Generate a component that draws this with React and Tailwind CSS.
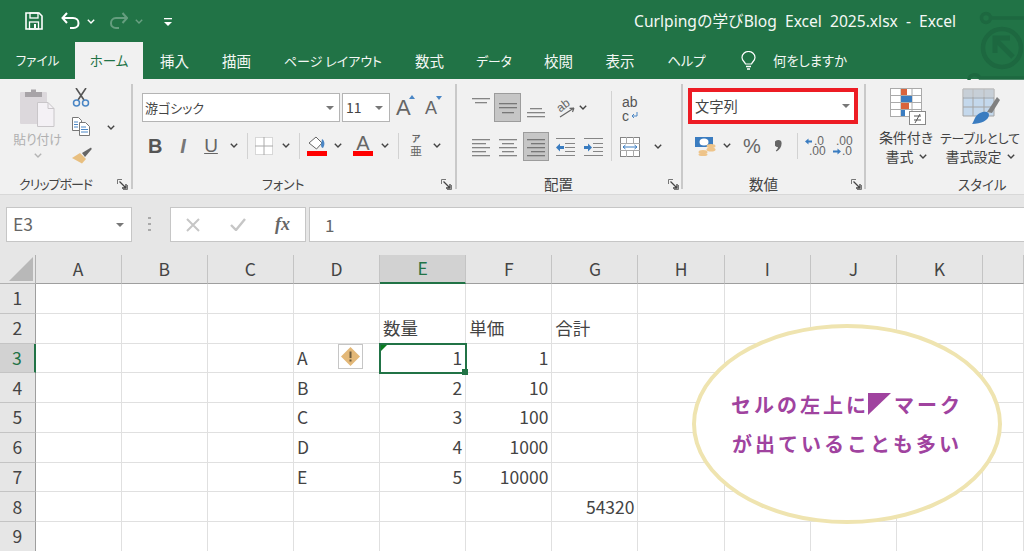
import React from 'react';

const JP = "font-['Noto_Sans_CJK_JP','Noto_Sans',sans-serif] [font-feature-settings:'palt']";

function Chev({ className = '', c = '#444' }) {
  return (
    <svg width="8" height="5" viewBox="0 0 8 5" className={`shrink-0 ${className}`}>
      <path d="M.8.8 4 4 7.2.8" fill="none" stroke={c} strokeWidth="1.4" />
    </svg>
  );
}
function Caret({ className = '' }) {
  return (
    <svg width="8" height="4" viewBox="0 0 8 4" className={`shrink-0 ${className}`}>
      <path d="M0 0h8L4 4z" fill="#777" />
    </svg>
  );
}
function Launcher({ className = '' }) {
  return (
    <svg width="11" height="11" viewBox="0 0 11 11" className={`shrink-0 ${className}`}>
      <path d="M.5 5V.5H5M10.5 6v4.5H6" fill="none" stroke="#777" />
      <path d="M2.5 2.5 9 9M9 5v4H5" fill="none" stroke="#444" strokeWidth="1.3" />
    </svg>
  );
}
function Sep({ className = '' }) {
  return <div className={`w-px h-[26px] bg-[#d2d2d2] shrink-0 ${className}`} />;
}
function Bars({ rows, w = 18, color = '#858585' }) {
  return (
    <svg width={w} height="29" viewBox={`0 0 ${w} 29`}>
      {rows.map((r, i) => (
        <rect key={i} x={r[1]} y={r[0]} width={r[2]} height="1.3" fill={color} />
      ))}
    </svg>
  );
}
function Cell({ active, className = '', children }) {
  return (
    <div className={`w-[27px] h-[29px] flex items-center justify-center shrink-0 ${active ? 'bg-[#c6c6c6] border border-[#9c9c9c]' : ''} ${className}`}>
      {children}
    </div>
  );
}

function Title() {
  return (
    <div className="h-[42px] flex items-center relative">
      <svg width="18" height="18" viewBox="0 0 18 18" className="ml-[25px]">
        <path d="M1 1h13l3 3v13H1z" fill="none" stroke="#fff" strokeWidth="1.6" />
        <rect x="5" y="1" width="8" height="5" fill="none" stroke="#fff" strokeWidth="1.3" />
        <rect x="4.500" y="10" width="9" height="7" fill="none" stroke="#fff" strokeWidth="1.3" />
        <rect x="9" y="12" width="2" height="4" fill="#fff" />
      </svg>
      <svg width="19" height="18" viewBox="0 0 19 18" className="ml-[18px]">
        <path d="M6 1 1.500 6 6 11" fill="none" stroke="#fff" strokeWidth="2" />
        <path d="M2 6h10c3.500 0 5.500 2.400 5.500 5.200 0 2.800-2 4.800-5 4.800H9" fill="none" stroke="#fff" strokeWidth="2" />
      </svg>
      <Chev c="#fff" className="ml-[7px]" />
      <svg width="18" height="18" viewBox="0 0 18 18" className="ml-[15px] opacity-30">
        <path d="M12.500 1 17 6l-4.500 5" fill="none" stroke="#fff" strokeWidth="2" />
        <path d="M16 6H6C2.800 6 1 8.400 1 11.200 1 14 3 16 6 16h3" fill="none" stroke="#fff" strokeWidth="2" />
      </svg>
      <Chev c="#ffffff55" className="ml-[7px]" />
      <svg width="10" height="10" viewBox="0 0 10 10" className="ml-[20px] mt-[1px]">
        <rect x="1" y="1" width="8" height="1.300" fill="#fff" />
        <path d="M1 5h8L5 9z" fill="#fff" />
      </svg>
      <div className={`flex-1 text-right pr-[68px] pt-[2px] text-[15.600px] text-[#f4f8f5] whitespace-pre font-['Noto_Sans','Noto_Sans_CJK_JP',sans-serif]`}>
        {'Curlpingの学びBlog  Excel  2025.xlsx  -  Excel'}
      </div>
    </div>
  );
}

function Watermark() {
  return (
    <svg width="64" height="80" viewBox="0 0 64 80" className="absolute left-[960px] top-0 pointer-events-none">
      <g fill="none" stroke="#1d6840" strokeWidth="3.500">
        <circle cx="42" cy="48" r="19" strokeWidth="4.500" />
        <circle cx="26" cy="18" r="4.500" />
        <path d="M31 18h33M9 80c0-6 8-7 11-2h44" />
        <path d="M37 41 53 57" strokeWidth="5" />
        <path d="M35 53V38h15" strokeWidth="5" />
      </g>
    </svg>
  );
}

function Tabs() {
  const tabs = [
    ['ファイル', 'w-[75px] text-[12.600px]'],
    ['ホーム', 'w-[68px] text-[13.500px] bg-[#f1f1f1] !text-[#217346]'],
    ['挿入', 'w-[63px] text-[14.500px]'],
    ['描画', 'w-[61px] text-[14.500px]'],
    ['ページ レイアウト', 'w-[132px] text-[13px]'],
    ['数式', 'w-[61px] text-[14.500px]'],
    ['データ', 'w-[68px] text-[12.800px]'],
    ['校閲', 'w-[61px] text-[14.500px]'],
    ['表示', 'w-[62px] text-[14.500px]'],
    ['ヘルプ', 'w-[71px] text-[13.300px]'],
  ];
  return (
    <div className={`h-[37px] flex text-[#f3f7f4] ${JP}`}>
      {tabs.map(([t, c]) => (
        <div key={t} className={`h-full flex items-center justify-center whitespace-nowrap ${c}`}>{t}</div>
      ))}
      <svg width="15" height="20" viewBox="0 0 15 20" className="ml-[19px] mt-[9px]">
        <path d="M4.500 13C3.500 10.500 1 9.500 1 6.500a6.500 6 0 0 1 13 0c0 3-2.500 4-3.500 6.500z" fill="none" stroke="#fff" strokeWidth="1.200" />
        <path d="M5 15.500h5M6 18h3" stroke="#fff" strokeWidth="1.300" />
      </svg>
      <div className="ml-[17px] h-full flex items-center text-[13.300px]">何をしますか</div>
    </div>
  );
}

function ClipboardGroup() {
  return (
    <div className="w-[133px] h-[105px] mt-[5px] border-r-2 border-[#c9c9c9] flex flex-col shrink-0">
      <div className="h-[92px] shrink-0 flex">
        <div className="ml-[12px] w-[51px] flex flex-col items-center">
          <svg width="35" height="39" viewBox="0 0 35 39" className="mt-[4px] shrink-0">
            <rect x="0" y="4" width="27" height="32" rx="1" fill="#dcd8dc" />
            <path d="M5 9V4h6V1.500h5V4h6v5z" fill="#a8a4a8" />
            <path d="M17.500 14.500h10.500l6 6v18H17.500z" fill="#f4f1f5" stroke="#c9c6c9" />
            <path d="M28 14.500v6h6" fill="none" stroke="#c9c6c9" />
          </svg>
          <div className={`text-[12.800px] leading-[18px] mt-[3px] text-[#b0b0b0] whitespace-nowrap ${JP}`}>貼り付け</div>
          <Chev c="#b4b4b4" className="mt-[5px]" />
        </div>
        <div className="ml-[9px] flex flex-col">
          <svg width="18" height="19" viewBox="0 0 18 19" className="mt-[4px]">
            <path d="M4 0l8 12M14 0 6 12" stroke="#555" strokeWidth="1.600" fill="none" />
            <circle cx="4.500" cy="15" r="3" fill="none" stroke="#4a86c5" strokeWidth="1.500" />
            <circle cx="13.500" cy="15" r="3" fill="none" stroke="#4a86c5" strokeWidth="1.500" />
          </svg>
          <div className="flex items-center mt-[10px]">
            <svg width="18" height="19" viewBox="0 0 18 19">
              <path d="M.5.5h6l3 3v10H.5z" fill="#fff" stroke="#777" />
              <path d="M7.500 5.500h6l4 4v9h-10z" fill="#fff" stroke="#777" />
              <path d="M2 5h4M2 7.500h4M2 10h4M9 10h5M9 12.500h7M9 15h7" stroke="#4a86c5" />
            </svg>
            <Chev className="ml-[17px] mt-[2px]" />
          </div>
          <svg width="20" height="17" viewBox="0 0 20 17" className="mt-[11px]">
            <path d="M0 11 8 6l6 6-4 4.500z" fill="#e8bf80" />
            <path d="M10 6 19 .5l.8 1.500-6.800 8z" fill="#666" />
          </svg>
        </div>
      </div>
      <div className={`h-[16px] shrink-0 flex items-center pl-[19px] text-[13px] tracking-[-1px] text-[#444] ${JP}`}>
        <span className="w-[74px] whitespace-nowrap">クリップボード</span>
        <Launcher className="ml-[24px]" />
      </div>
    </div>
  );
}

function FontGroup() {
  return (
    <div className="w-[324px] h-[105px] mt-[5px] border-r-2 border-[#c9c9c9] flex flex-col shrink-0">
      <div className="h-[92px] shrink-0 flex flex-col">
        <div className="flex items-center mt-[9px] h-[29px]">
          <div className={`ml-[9px] w-[198px] h-[29px] bg-white border border-[#b4b4b4] flex items-center justify-between pl-[2px] pr-[5px] text-[13px] text-[#444] ${JP}`}>
            游ゴシック
            <Caret />
          </div>
          <div className={`ml-[2px] w-[48px] h-[29px] bg-white border border-[#b4b4b4] flex items-center justify-between pl-[3px] pr-[6px] text-[14px] text-[#444] ${JP}`}>
            11
            <Caret />
          </div>
          <div className="ml-[6px] relative w-[18px] text-[22px] leading-none text-[#666] font-['Liberation_Sans',sans-serif]">
            A
            <svg width="6" height="4" viewBox="0 0 6 4" className="absolute left-[13px] top-[-2px]"><path d="M3 0l3 4H0z" fill="#4a86c5" /></svg>
          </div>
          <div className="ml-[11px] relative w-[16px] text-[18px] leading-none text-[#666] font-['Liberation_Sans',sans-serif]">
            A
            <svg width="6" height="4" viewBox="0 0 6 4" className="absolute left-[11px] top-[-3px]"><path d="M0 0h6L3 4z" fill="#4a86c5" /></svg>
          </div>
        </div>
        <div className="flex items-center mt-[9px] h-[29px] text-[#555] font-['Liberation_Sans',sans-serif]">
          <div className="ml-[15px] w-[14px] text-center text-[20px] font-bold">B</div>
          <div className="ml-[14px] w-[14px] text-center text-[20px] italic font-bold text-[#777]">I</div>
          <div className="ml-[14px] w-[14px] text-center text-[19px] underline leading-[22px] text-[#666]">U</div>
          <Chev className="ml-[12px]" />
          <Sep className="ml-[9px]" />
          <svg width="18" height="18" viewBox="0 0 18 18" className="ml-[7px]">
            <rect x=".5" y=".5" width="17" height="17" fill="#fff" stroke="#b8b8b8" strokeDasharray="1 1" />
            <path d="M9 0v18M0 9h18" stroke="#aaa" />
          </svg>
          <Chev className="ml-[9px]" />
          <Sep className="ml-[9px]" />
          <div className="ml-[6px] w-[21px] flex flex-col items-center">
            <svg width="18" height="15" viewBox="0 0 18 15">
              <path d="M1 7 8 1l6 6-5.500 6z" fill="#fff" stroke="#666" />
              <path d="M14 3c3 2 3 6 1 9-1 0-2-1-2-3" fill="#4a86c5" />
            </svg>
            <div className="w-[20px] h-[5px] bg-[#f00]" />
          </div>
          <Chev className="ml-[7px]" />
          <div className="ml-[11px] w-[20px] flex flex-col items-center">
            <div className="text-[20px] leading-[15px] h-[15px] text-[#666]">A</div>
            <div className="w-[20px] h-[5px] bg-[#f00]" />
          </div>
          <Chev className="ml-[8px]" />
          <Sep className="ml-[9px]" />
          <div className={`ml-[11px] w-[12px] flex flex-col items-center text-[#666] ${JP}`}>
            <span className="text-[9px] leading-[10px] font-bold">ア</span>
            <span className="text-[12px] leading-[14px]">亜</span>
          </div>
          <Chev className="ml-[11px]" />
        </div>
      </div>
      <div className={`h-[16px] shrink-0 flex items-center pl-[129px] text-[13px] text-[#444] ${JP}`}>
        <span className="w-[42px] whitespace-nowrap">フォント</span>
        <Launcher className="ml-[137px]" />
      </div>
    </div>
  );
}

function AlignGroup() {
  const L = [[7, 0, 18], [11, 0, 14], [15, 0, 18], [19, 0, 14], [23, 0, 18]];
  const C = [[7, 0, 18], [11, 3, 12], [15, 0, 18], [19, 3, 12], [23, 0, 18]];
  const R = [[7, 0, 18], [11, 4, 14], [15, 0, 18], [19, 4, 14], [23, 0, 18]];
  return (
    <div className="w-[226px] h-[105px] mt-[5px] border-r-2 border-[#c9c9c9] flex flex-col shrink-0">
      <div className="h-[92px] shrink-0 flex items-start pt-[9px]">
        <div className="ml-[10px] w-[144px] shrink-0 flex flex-col">
          <div className="flex items-center h-[29px]">
            <Cell><Bars rows={[[5, 0, 18], [9, 3, 12], [13, 5, 0]]} /></Cell>
            <Cell active><Bars rows={[[10, 0, 18], [14, 0, 18], [19, 3, 12]]} color="#777" /></Cell>
            <Cell className="ml-[1px]"><Bars rows={[[15, 3, 12], [19, 0, 18], [23, 0, 18]]} /></Cell>
            <svg width="20" height="21" viewBox="0 0 20 21" className="ml-[6px] overflow-visible">
              <text x="2" y="12" fontSize="12" fill="#666" transform="rotate(-38 9 9)" fontFamily="Liberation Sans">ab</text>
              <path d="M5 20 19 11M19 11l-4.500 .3M19 11l-1.500 4" stroke="#666" strokeWidth="1.200" fill="none" />
            </svg>
            <Chev className="ml-[4px]" />
          </div>
          <div className="flex items-center h-[29px] mt-[10px]">
            <Cell><Bars rows={L} /></Cell>
            <Cell><Bars rows={C} /></Cell>
            <Cell active className="ml-[2px] !w-[26px]"><Bars rows={R} color="#777" /></Cell>
            <Cell className="ml-[3px]">
              <svg width="19" height="20" viewBox="0 0 19 20">
                <path d="M0 1.500h19M9 6.500h10M9 10.500h10M9 14.500h10M0 18.500h19" stroke="#858585" strokeWidth="1.200" />
                <path d="M0 10.500 4 6.500v2.500h4v3H4v2.500z" fill="#3a7cc0" />
              </svg>
            </Cell>
            <Cell className="ml-px">
              <svg width="19" height="20" viewBox="0 0 19 20">
                <path d="M0 1.500h19M9 6.500h10M9 10.500h10M9 14.500h10M0 18.500h19" stroke="#858585" strokeWidth="1.200" />
                <path d="M8 10.500 4 6.500v2.500H0v3h4v2.500z" fill="#3a7cc0" />
              </svg>
            </Cell>
          </div>
        </div>
        <div className="w-px h-[70px] bg-[#d2d2d2] mt-[-2px] shrink-0" />
        <div className="flex flex-col shrink-0">
          <div className="h-[29px] ml-[10px] flex flex-col items-start justify-center text-[#555] font-['Liberation_Sans',sans-serif] text-[14px] leading-[14px] mt-[1px]">
            <span>ab</span>
            <span className="flex items-center">c
              <svg width="7" height="7" viewBox="0 0 7 7" className="ml-[2px]"><path d="M6 0v4H1M3 2 1 4l2 2" fill="none" stroke="#4a86c5" /></svg>
            </span>
          </div>
          <div className="h-[29px] mt-[9px] flex items-center">
            <svg width="20" height="20" viewBox="0 0 20 20" className="ml-[8px]">
              <rect x=".5" y=".5" width="19" height="19" fill="#fff" stroke="#858585" />
              <path d="M0 6.500h20M0 13.500h20M6.500 0v6.500M13.500 0v6.500M6.500 13.500V20M13.500 13.500V20" stroke="#aaa" />
              <path d="M3 10h14M3 10l2.500-2M3 10l2.500 2M17 10l-2.500-2M17 10l-2.500 2" fill="none" stroke="#3a7cc0" />
            </svg>
            <Chev className="ml-[14px]" />
          </div>
        </div>
      </div>
      <div className={`h-[16px] shrink-0 flex items-center pl-[87px] text-[14.500px] text-[#444] ${JP}`}>
        <span className="w-[29px] whitespace-nowrap">配置</span>
        <Launcher className="ml-[95px]" />
      </div>
    </div>
  );
}

function NumberGroup() {
  return (
    <div className="w-[183px] h-[105px] mt-[5px] border-r-2 border-[#c9c9c9] flex flex-col shrink-0">
      <div className="h-[92px] shrink-0 flex flex-col">
        <div className={`ml-[5px] mt-[4px] w-[170px] h-[36px] bg-white border-[4px] border-[#ed1c24] flex items-center justify-between pl-[3px] pr-[4px] text-[14.300px] text-[#444] ${JP}`}>
          文字列
          <Caret />
        </div>
        <div className="flex items-center mt-[7px] h-[29px]">
          <svg width="21" height="20" viewBox="0 0 21 20" className="ml-[12px]">
            <rect x="0" y="1" width="18" height="10" fill="#3a7cc0" />
            <ellipse cx="9" cy="6" rx="4.500" ry="3.500" fill="#fff" />
            <ellipse cx="16" cy="10" rx="4.500" ry="2" fill="#eec48a" />
            <ellipse cx="16" cy="13.500" rx="4.500" ry="2" fill="#eec48a" />
            <ellipse cx="8" cy="16" rx="4.500" ry="2" fill="#eec48a" />
            <ellipse cx="8" cy="18.500" rx="4.500" ry="1.500" fill="#eec48a" />
          </svg>
          <Chev className="ml-[7px]" />
          <div className="ml-[12px] w-[18px] text-[20px] text-[#666] text-center leading-none font-['Liberation_Sans',sans-serif]">%</div>
          <svg width="7" height="12" viewBox="0 0 7 12" className="ml-[14px]">
            <path d="M3.200 0a3.400 3.400 0 0 1 3.400 3.600c0 3.400-2.300 6.400-5 8l-.8-1c1.300-1.100 2-2.200 2.300-3.300A3.400 3.400 0 0 1 3.200 0z" fill="#666" />
          </svg>
          <Sep className="ml-[15px]" />
          <svg width="21" height="20" viewBox="0 0 21 20" className="ml-[7px] overflow-visible">
            <path d="M0 5.500 3.500 2.500v2H7v2H3.500v2z" fill="#3a7cc0" />
            <text x="9" y="9" fontSize="12" fill="#666" fontFamily="Liberation Sans">.0</text>
            <text x="4" y="19" fontSize="12" fill="#666" fontFamily="Liberation Sans">.00</text>
          </svg>
          <svg width="20" height="20" viewBox="0 0 20 20" className="ml-[7px] overflow-visible">
            <text x="3" y="9" fontSize="12" fill="#666" fontFamily="Liberation Sans">.00</text>
            <path d="M8 15.500 4.500 12.500v2H0v2h4.500v2z" fill="#3a7cc0" />
            <text x="9" y="19" fontSize="12" fill="#666" fontFamily="Liberation Sans">.0</text>
          </svg>
        </div>
      </div>
      <div className={`h-[16px] shrink-0 flex items-center pl-[66px] text-[14.500px] text-[#444] ${JP}`}>
        <span className="w-[29px] whitespace-nowrap">数値</span>
        <Launcher className="ml-[73px]" />
      </div>
    </div>
  );
}

function StyleGroup() {
  return (
    <div className={`flex-1 h-[105px] mt-[5px] flex flex-col ${JP}`}>
      <div className="h-[92px] shrink-0 flex text-[14px] leading-[19px] text-[#444]">
        <div className="ml-[12px] w-[56px] shrink-0 flex flex-col items-center">
          <svg width="36" height="37" viewBox="0 0 36 37" className="mt-[4px] ml-[3px] shrink-0">
            <rect x=".5" y=".5" width="31" height="28" fill="#fff" stroke="#aaa" />
            <path d="M0 7.500h32M0 14.500h32M0 21.500h32M11 0v29M22 0v29" stroke="#aaa" />
            <rect x="11" y="1" width="6" height="6" fill="#d9643c" />
            <rect x="11" y="8" width="11" height="6" fill="#3a7cc0" />
            <rect x="11" y="15" width="8" height="6" fill="#d9643c" />
            <rect x="11" y="22" width="4" height="6" fill="#3a7cc0" />
            <rect x="19.500" y="23.500" width="16" height="13" fill="#fff" stroke="#888" />
            <path d="M24 28h7M24 32h7M25 35l5-9" stroke="#555" fill="none" />
          </svg>
          <div className="mt-[3px] whitespace-nowrap">条件付き</div>
          <div className="flex items-center whitespace-nowrap">書式<Chev className="ml-[5px]" /></div>
        </div>
        <div className="ml-[6px] w-[80px] shrink-0 flex flex-col items-center">
          <svg width="38" height="37" viewBox="0 0 38 37" className="mt-[4px] ml-[2px] shrink-0">
            <rect x="1" y="1" width="31" height="27" fill="#c4d8ec" />
            <path d="M1 1h31v27H1zM1 10h31M1 19h31M11 1v27M22 1v27" fill="none" stroke="#a4a4a4" />
            <path d="M1 1h31v8H1z" fill="#c9c9c9" opacity=".6" />
            <path d="M25 24 35 9l3 3-8 13z" fill="#808080" />
            <path d="M10 36c2-2 2-8 8-11 4-2 9-2 9 2 0 5-8 9-17 9z" fill="#3a7cc0" />
          </svg>
          <div className="mt-[3px] whitespace-nowrap text-[12.800px]">テーブルとして</div>
          <div className="flex items-center whitespace-nowrap">書式設定<Chev className="ml-[5px]" /></div>
        </div>
      </div>
      <div className="h-[16px] shrink-0 pl-[92px] text-[13.500px] leading-[16px] text-[#444]">スタイル</div>
    </div>
  );
}

function FormulaBar() {
  return (
    <div className="h-[61px] bg-[#e6e6e6] border-t border-[#d8d8d8] flex items-start pt-[12px]">
      <div className={`ml-[6px] w-[126px] h-[35px] bg-white border border-[#c6c6c6] flex items-center justify-between pl-[6px] pr-[7px] text-[17.500px] text-[#666] ${JP}`}>
        E3
        <Caret />
      </div>
      <div className="ml-[16px] w-[3px] h-[14px] mt-[10px] flex flex-col justify-between items-center">
        <div className="w-[3px] h-[2px] bg-[#aaa]" />
        <div className="w-[3px] h-[2px] bg-[#aaa]" />
        <div className="w-[3px] h-[2px] bg-[#aaa]" />
      </div>
      <div className="ml-[19px] w-[136px] h-[35px] bg-white border border-[#c6c6c6] flex items-center">
        <svg width="14" height="14" viewBox="0 0 14 14" className="ml-[15px]"><path d="M1 1l12 12M13 1 1 13" stroke="#c6c6c6" strokeWidth="2" /></svg>
        <svg width="16" height="13" viewBox="0 0 16 13" className="ml-[30px]"><path d="M1 7l5 5L15 1" fill="none" stroke="#c6c6c6" strokeWidth="2.400" /></svg>
        <div className="ml-[29px] text-[18px] italic font-bold text-[#666] font-['Liberation_Serif',serif]">fx</div>
      </div>
      <div className={`ml-[3px] flex-1 h-[35px] bg-white border border-[#c6c6c6] border-r-0 flex items-center pl-[15px] text-[17px] text-[#666] ${JP}`}>1</div>
    </div>
  );
}

function Sheet() {
  const cols = ['A', 'B', 'C', 'D', 'E', 'F', 'G', 'H', 'I', 'J', 'K', ''];
  const data = {
    '2E': ['数量', 'l'], '2F': ['単価', 'l'], '2G': ['合計', 'l'],
    '3D': ['A', 'l'], '4D': ['B', 'l'], '5D': ['C', 'l'], '6D': ['D', 'l'], '7D': ['E', 'l'],
    '3E': ['1', 'r'], '4E': ['2', 'r'], '5E': ['3', 'r'], '6E': ['4', 'r'], '7E': ['5', 'r'],
    '3F': ['1', 'r'], '4F': ['10', 'r'], '5F': ['100', 'r'], '6F': ['1000', 'r'], '7F': ['10000', 'r'],
    '8G': ['54320', 'r'],
  };
  const rows = [1, 2, 3, 4, 5, 6, 7, 8, 9];
  return (
    <div className={`grid grid-cols-[35.500px_repeat(11,86.150px)_1fr] grid-rows-[29px_repeat(9,29.750px)] text-[17.500px] text-[#444] ${JP}`}>
      <div className="bg-[#e6e6e6] border-b border-r border-[#b0b0b0] flex items-end justify-end pr-[2px] pb-[2px]">
        <svg width="24" height="24" viewBox="0 0 24 24"><path d="M24 0v24H0z" fill="#b8b8b8" /></svg>
      </div>
      {cols.map((c) => (
        <div
          key={c || 'x'}
          className={`flex items-center justify-center border-r border-[#c4c4c4] ${c === 'E' ? 'bg-[#d2d2d2] border-b-2 border-b-[#217346] text-[#217346]' : 'bg-[#e6e6e6] border-b border-b-[#9e9e9e]'}`}
        >
          {c}
        </div>
      ))}
      {rows.map((r) => (
        <React.Fragment key={r}>
          <div className={`flex items-center justify-center border-b border-[#c4c4c4] ${r === 3 ? 'bg-[#d2d2d2] border-r-2 border-r-[#217346] text-[#217346]' : 'bg-[#e6e6e6] border-r border-r-[#9e9e9e]'}`}>
            {r}
          </div>
          {cols.map((c) => {
            const d = data[`${r}${c}`];
            return (
              <div
                key={c || 'x'}
                className={`bg-white border-r border-b border-[#e0e0e0] flex items-center whitespace-nowrap ${d && d[1] === 'r' ? 'justify-end pr-[3px]' : 'justify-start pl-[3px]'}`}
              >
                {d ? d[0] : ''}
              </div>
            );
          })}
        </React.Fragment>
      ))}
    </div>
  );
}

function Overlays() {
  return (
    <>
      <div className="absolute left-[338px] top-[344px] w-[25px] h-[25px] bg-white border border-[#c6c6c6] flex items-center justify-center">
        <svg width="19" height="19" viewBox="0 0 19 19">
          <path d="M9.500 0 19 9.500 9.500 19 0 9.500z" fill="#e3b878" />
          <rect x="8.500" y="4.500" width="2" height="6.500" fill="#6b5a3c" />
          <rect x="8.500" y="12.500" width="2" height="2" fill="#6b5a3c" />
        </svg>
      </div>
      <div className="absolute left-[379px] top-[343px] w-[88px] h-[31px] border-2 border-[#217346]">
        <svg width="6" height="6" viewBox="0 0 6 6" className="absolute left-[0px] top-[0px]"><path d="M0 0h6L0 6z" fill="#0a7d1f" /></svg>
        <div className="absolute right-[-3px] bottom-[-3px] w-[6px] h-[6px] bg-[#217346]" />
      </div>
      <div className="absolute left-[692px] top-[324px] w-[310px] h-[200px] rounded-[50%] bg-white border-[4px] border-[#efe4b0] flex flex-col items-center justify-center text-[20px] font-bold leading-[39px] tracking-[3px] text-[#a0439f] font-['Noto_Sans_CJK_JP',sans-serif]">
        <div className="flex items-center whitespace-nowrap">
          セルの左上に
          <svg width="23" height="22" viewBox="0 0 23 22" className="ml-[-1px] mr-[3px] mb-[2px]"><path d="M0 0h23L0 22z" fill="#a0439f" /></svg>
          マーク
        </div>
        <div className="whitespace-nowrap">が出ていることも多い</div>
      </div>
    </>
  );
}

export default function App() {
  return (
    <div className="relative w-[1024px] h-[551px] overflow-hidden bg-white">
      <div className="bg-[#217346] h-[79px]">
        <Title />
        <Tabs />
      </div>
      <div className="h-[115px] bg-[#f1f1f1] flex">
        <ClipboardGroup />
        <FontGroup />
        <AlignGroup />
        <NumberGroup />
        <StyleGroup />
      </div>
      <FormulaBar />
      <Sheet />
      <Watermark />
      <Overlays />
    </div>
  );
}
